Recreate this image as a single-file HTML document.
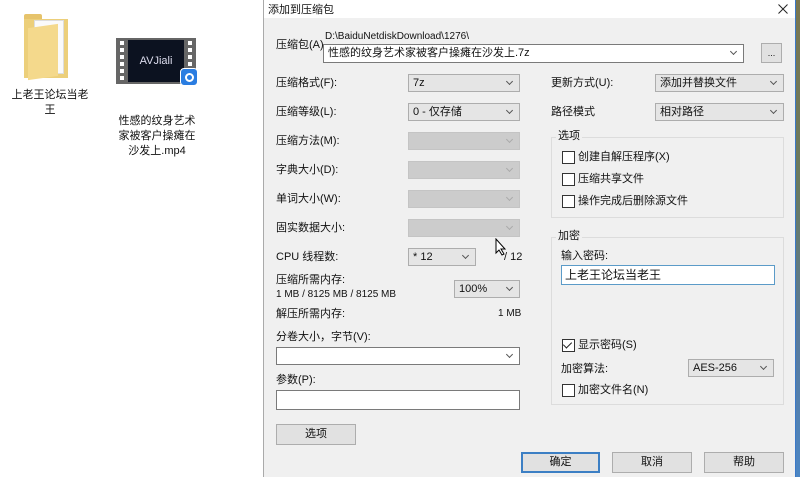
<!DOCTYPE html>
<html><head><meta charset="utf-8"><style>
*{margin:0;padding:0;box-sizing:border-box}
body{width:800px;height:477px;overflow:hidden;background:#fff;position:relative;font-family:"Liberation Sans","Microsoft YaHei","Noto Sans CJK SC",sans-serif;font-size:11px;color:#111}
.a{position:absolute;white-space:nowrap}
.lbl{position:absolute;white-space:nowrap;font-size:11px;line-height:14px}
.sel{position:absolute;background:#e5e5e5;border:1px solid #adadad;height:18px;font-size:11px;line-height:16px;padding-left:4px}
.sel:after{content:"";position:absolute;right:7px;top:4px;width:4px;height:4px;border-right:1px solid #555;border-bottom:1px solid #555;transform:rotate(45deg)}
.dis{background:#cccccc;border-color:#c4c4c4}
.dis:after{border-color:#aaa}
.wht{background:#fff;border-color:#7a7a7a}
.inp{position:absolute;background:#fff;border:1px solid #7a7a7a}
.btn{position:absolute;background:#e1e1e1;border:1px solid #adadad;text-align:center;font-size:11px;line-height:18px}
.grp{position:absolute;border:1px solid #dcdcdc}
.gt{position:absolute;background:#f0f0f0;padding:0 2px;font-size:11px;line-height:14px}
.cb{position:absolute;white-space:nowrap;font-size:11px;line-height:13px;padding-left:16px}
.cb:before{content:"";position:absolute;left:0;top:0;width:11px;height:11px;border:1px solid #333;background:#fff}
.ck:after{content:"";position:absolute;left:3px;top:1px;width:4px;height:7px;border-right:1.5px solid #222;border-bottom:1.5px solid #222;transform:rotate(45deg)}
.ic{position:absolute;text-align:center;font-size:11px;line-height:15px;color:#111}
</style></head><body>
<div class="a" style="left:24px;top:14px;width:44px;height:64px">
<div style="position:absolute;left:0;top:0;width:18px;height:8px;background:#e6c36b;border-radius:2px 2px 0 0"></div>
<div style="position:absolute;left:0;top:5px;width:44px;height:59px;background:#eccf7a"></div>
<div style="position:absolute;left:10px;top:6px;width:30px;height:54px;background:#fafafa;border:1px solid #ddd"></div>
<div style="position:absolute;left:4px;top:12px;width:30px;height:52px;background:#f4d98c;transform:skewY(-8deg)"></div>
</div>
<div class="ic" style="left:10px;top:88px;width:80px">上老王论坛当老<br>王</div>
<div class="a" style="left:116px;top:38px;width:80px;height:46px;background:#666">
<div style="position:absolute;left:4px;top:3px;width:4px;height:40px;background:repeating-linear-gradient(#fff 0 4px,#666 4px 7px)"></div>
<div style="position:absolute;right:4px;top:3px;width:4px;height:40px;background:repeating-linear-gradient(#fff 0 4px,#666 4px 7px)"></div>
<div style="position:absolute;left:12px;top:2px;width:56px;height:42px;background:#0c1220;color:#dde;font-size:11px;line-height:42px;text-align:center">AVJiali</div>
</div>
<div class="a" style="left:180px;top:68px;width:18px;height:18px;background:#2a7de1;border-radius:4px;border:1px solid #fff"><div style="position:absolute;left:4px;top:4px;width:9px;height:9px;border:2px solid #fff;border-radius:50%"></div></div>
<div class="ic" style="left:107px;top:114px;width:100px">性感的纹身艺术<br>家被客户操瘫在<br>沙发上.mp4</div>
<div class="a" style="left:795px;top:0;width:5px;height:477px;background:linear-gradient(#7a7650,#6a7a60 40%,#5a7a9a 70%,#4c86c4)"></div>
<div class="a" style="left:263px;top:0;width:533px;height:477px;background:#f0f0f0;border-left:1px solid #aaa;border-right:1px solid #3a78c8"></div>
<div class="a" style="left:264px;top:0;width:531px;height:18px;background:#fff"></div>
<div class="lbl" style="left:268px;top:3px">添加到压缩包</div>
<svg class="a" style="left:778px;top:4px" width="10" height="10"><path d="M0.5 0.5 L9.5 9.5 M9.5 0.5 L0.5 9.5" stroke="#222" stroke-width="1"/></svg>

<div class="lbl" style="left:276px;top:38px">压缩包(A)</div>
<div class="lbl" style="left:325px;top:30px;font-size:10px">D:\BaiduNetdiskDownload\1276\</div>
<div class="sel wht" style="left:323px;top:44px;width:421px;height:19px">性感的纹身艺术家被客户操瘫在沙发上.7z</div>
<div class="btn" style="left:761px;top:43px;width:21px;height:20px;font-size:9px">...</div>

<div class="lbl" style="left:276px;top:76px">压缩格式(F):</div>
<div class="sel" style="left:408px;top:74px;width:112px">7z</div>
<div class="lbl" style="left:551px;top:76px">更新方式(U):</div>
<div class="sel" style="left:655px;top:74px;width:129px">添加并替换文件</div>

<div class="lbl" style="left:276px;top:105px">压缩等级(L):</div>
<div class="sel" style="left:408px;top:103px;width:112px">0 - 仅存储</div>
<div class="lbl" style="left:551px;top:105px">路径模式</div>
<div class="sel" style="left:655px;top:103px;width:129px">相对路径</div>

<div class="lbl" style="left:276px;top:134px">压缩方法(M):</div>
<div class="sel dis" style="left:408px;top:132px;width:112px"></div>
<div class="lbl" style="left:276px;top:163px">字典大小(D):</div>
<div class="sel dis" style="left:408px;top:161px;width:112px"></div>
<div class="lbl" style="left:276px;top:192px">单词大小(W):</div>
<div class="sel dis" style="left:408px;top:190px;width:112px"></div>
<div class="lbl" style="left:276px;top:221px">固实数据大小:</div>
<div class="sel dis" style="left:408px;top:219px;width:112px"></div>

<div class="lbl" style="left:276px;top:250px">CPU 线程数:</div>
<div class="sel" style="left:408px;top:248px;width:68px">* 12</div>
<div class="lbl" style="left:504px;top:250px">/ 12</div>
<svg class="a" style="left:495px;top:238px" width="12" height="18"><path d="M1 1 L1 15 L4 12 L7 17 L9 16 L6 11 L10 11 Z" fill="#fff" stroke="#000" stroke-width="1"/></svg>

<div class="lbl" style="left:276px;top:273px">压缩所需内存:</div>
<div class="lbl" style="left:276px;top:288px;font-size:10px">1 MB / 8125 MB / 8125 MB</div>
<div class="sel" style="left:454px;top:280px;width:66px">100%</div>
<div class="lbl" style="left:276px;top:307px">解压所需内存:</div>
<div class="lbl" style="left:498px;top:307px;font-size:10px">1 MB</div>

<div class="lbl" style="left:276px;top:330px">分卷大小，字节(V):</div>
<div class="sel wht" style="left:276px;top:347px;width:244px"></div>
<div class="lbl" style="left:276px;top:373px">参数(P):</div>
<div class="inp" style="left:276px;top:390px;width:244px;height:20px"></div>
<div class="btn" style="left:276px;top:424px;width:80px;height:21px">选项</div>

<div class="grp" style="left:551px;top:137px;width:233px;height:81px"></div>
<div class="gt" style="left:556px;top:129px">选项</div>
<div class="cb" style="left:562px;top:151px">创建自解压程序(X)</div>
<div class="cb" style="left:562px;top:173px">压缩共享文件</div>
<div class="cb" style="left:562px;top:195px">操作完成后删除源文件</div>

<div class="grp" style="left:551px;top:237px;width:233px;height:168px"></div>
<div class="gt" style="left:556px;top:229px">加密</div>
<div class="lbl" style="left:561px;top:249px">输入密码:</div>
<div class="inp" style="left:561px;top:265px;width:214px;height:20px;border-color:#5b9bc8;font-size:12px;line-height:18px;padding-left:3px">上老王论坛当老王</div>
<div class="cb ck" style="left:562px;top:339px">显示密码(S)</div>
<div class="lbl" style="left:561px;top:362px">加密算法:</div>
<div class="sel" style="left:688px;top:359px;width:86px">AES-256</div>
<div class="cb" style="left:562px;top:384px">加密文件名(N)</div>

<div class="btn" style="left:521px;top:452px;width:79px;height:21px;border:2px solid #3c7fc4;line-height:17px">确定</div>
<div class="btn" style="left:612px;top:452px;width:80px;height:21px">取消</div>
<div class="btn" style="left:704px;top:452px;width:80px;height:21px">帮助</div>
</body></html>
